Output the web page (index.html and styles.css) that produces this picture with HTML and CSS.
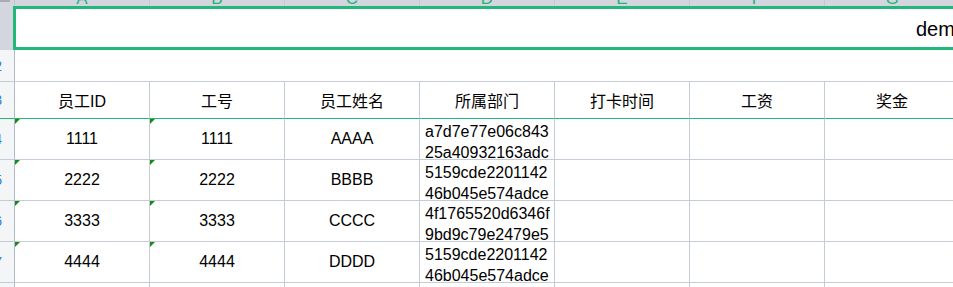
FILE: index.html
```html
<!DOCTYPE html>
<html lang="zh">
<head>
<meta charset="utf-8">
<title>sheet</title>
<link rel="stylesheet" href="styles.css">
</head>
<body>
<div class="sheet">
  <div class="colhead">
    <div class="corner"><div class="corner-mark"></div></div>
    <div class="ch"><span>A</span></div>
    <div class="ch"><span>B</span></div>
    <div class="ch"><span>C</span></div>
    <div class="ch"><span>D</span></div>
    <div class="ch"><span>E</span></div>
    <div class="ch"><span>F</span></div>
    <div class="ch"><span>G</span></div>
  </div>

  <div class="row r1">
    <div class="rh sel"><span>1</span></div>
    <div class="merged"><span>demo</span></div>
  </div>

  <div class="row r2">
    <div class="rh"><span>2</span></div>
    <div class="blank"></div>
  </div>

  <div class="row r3">
    <div class="rh"><span>3</span></div>
    <div class="c">员工ID</div>
    <div class="c">工号</div>
    <div class="c">员工姓名</div>
    <div class="c">所属部门</div>
    <div class="c">打卡时间</div>
    <div class="c">工资</div>
    <div class="c">奖金</div>
  </div>

  <div class="row rd">
    <div class="rh"><span>4</span></div>
    <div class="c tri">1111</div>
    <div class="c tri">1111</div>
    <div class="c">AAAA</div>
    <div class="c hex"><span>a7d7e77e06c843</span><span>25a40932163adc</span></div>
    <div class="c"></div>
    <div class="c"></div>
    <div class="c"></div>
  </div>

  <div class="row rd">
    <div class="rh"><span>5</span></div>
    <div class="c tri">2222</div>
    <div class="c tri">2222</div>
    <div class="c">BBBB</div>
    <div class="c hex"><span>5159cde2201142</span><span>46b045e574adce</span></div>
    <div class="c"></div>
    <div class="c"></div>
    <div class="c"></div>
  </div>

  <div class="row rd">
    <div class="rh"><span>6</span></div>
    <div class="c tri">3333</div>
    <div class="c tri">3333</div>
    <div class="c">CCCC</div>
    <div class="c hex"><span>4f1765520d6346f</span><span>9bd9c79e2479e5</span></div>
    <div class="c"></div>
    <div class="c"></div>
    <div class="c"></div>
  </div>

  <div class="row rd">
    <div class="rh"><span>7</span></div>
    <div class="c tri">4444</div>
    <div class="c tri">4444</div>
    <div class="c">DDDD</div>
    <div class="c hex"><span>5159cde2201142</span><span>46b045e574adce</span></div>
    <div class="c"></div>
    <div class="c"></div>
    <div class="c"></div>
  </div>

  <div class="row rd">
    <div class="rh"><span>8</span></div>
    <div class="c"></div>
    <div class="c"></div>
    <div class="c"></div>
    <div class="c"></div>
    <div class="c"></div>
    <div class="c"></div>
    <div class="c"></div>
  </div>
</div>
</body>
</html>
```

FILE: styles.css
```css
html, body {
  margin: 0;
  padding: 0;
  background: #ffffff;
  overflow: hidden;
}

.sheet {
  width: 953px;
  height: 287px;
  overflow: hidden;
  font-family: "Liberation Sans", "Noto Sans CJK SC", sans-serif;
  font-size: 16px;
  color: #000000;
}

.row,
.colhead {
  display: flex;
  white-space: nowrap;
}

/* column header strip (mostly scrolled off) */
.colhead {
  height: 6px;
  background: #d3d6de;
  overflow: hidden;
}

.corner {
  width: 15px;
  flex: none;
  box-sizing: border-box;
  border-right: 1px solid #c2c6ce;
}

.corner-mark {
  width: 10px;
  height: 2px;
  background: #a9acb2;
}

.ch {
  width: 135px;
  flex: none;
  box-sizing: border-box;
  border-right: 1px solid #c4c8d0;
  text-align: center;
  color: #24b47b;
  font-size: 17px;
  line-height: 16px;
}

.ch span {
  display: block;
  margin-top: -9px;
}

/* row headers */
.rh {
  width: 15px;
  flex: none;
  box-sizing: border-box;
  border-right: 1px solid #b4bbca;
  border-bottom: 1px solid #c6cbd8;
  background: #f4f5f7;
  color: #2f80d9;
  font-size: 14px;
  overflow: hidden;
  display: flex;
  align-items: center;
  justify-content: flex-end;
}

.rh span {
  margin-right: 12px;
}

.rh.sel {
  background: #d3d6de;
  border-bottom: none;
  color: transparent;
}

/* row 1 : merged title cell with selection outline */
.r1 {
  height: 44px;
}

.merged {
  flex: none;
  width: 1856px;
  margin-left: -2px;
  box-sizing: border-box;
  border: 3px solid #22b87a;
  display: flex;
  align-items: center;
  justify-content: center;
  font-size: 20px;
  padding-top: 3px;
}

/* row 2 : empty */
.r2 {
  height: 32px;
}

.blank {
  flex: 1;
  border-bottom: 1px solid #c6cbd8;
}

/* header row */
.r3 {
  height: 37px;
}

.r3 .c,
.r3 .rh {
  border-bottom: 1px solid #22b87a;
}

/* data rows */
.rd {
  height: 41px;
}

.c {
  width: 135px;
  flex: none;
  box-sizing: border-box;
  border-right: 1px solid #c6cbd8;
  border-bottom: 1px solid #c6cbd8;
  display: flex;
  align-items: center;
  justify-content: center;
  position: relative;
}

.c.hex {
  flex-direction: column;
  align-items: flex-start;
  justify-content: flex-start;
  padding: 2px 0 0 5px;
  line-height: 21px;
}

.c.tri::before {
  content: "";
  position: absolute;
  left: 0;
  top: 0;
  border-top: 5px solid #168a1a;
  border-right: 5px solid transparent;
}
```
